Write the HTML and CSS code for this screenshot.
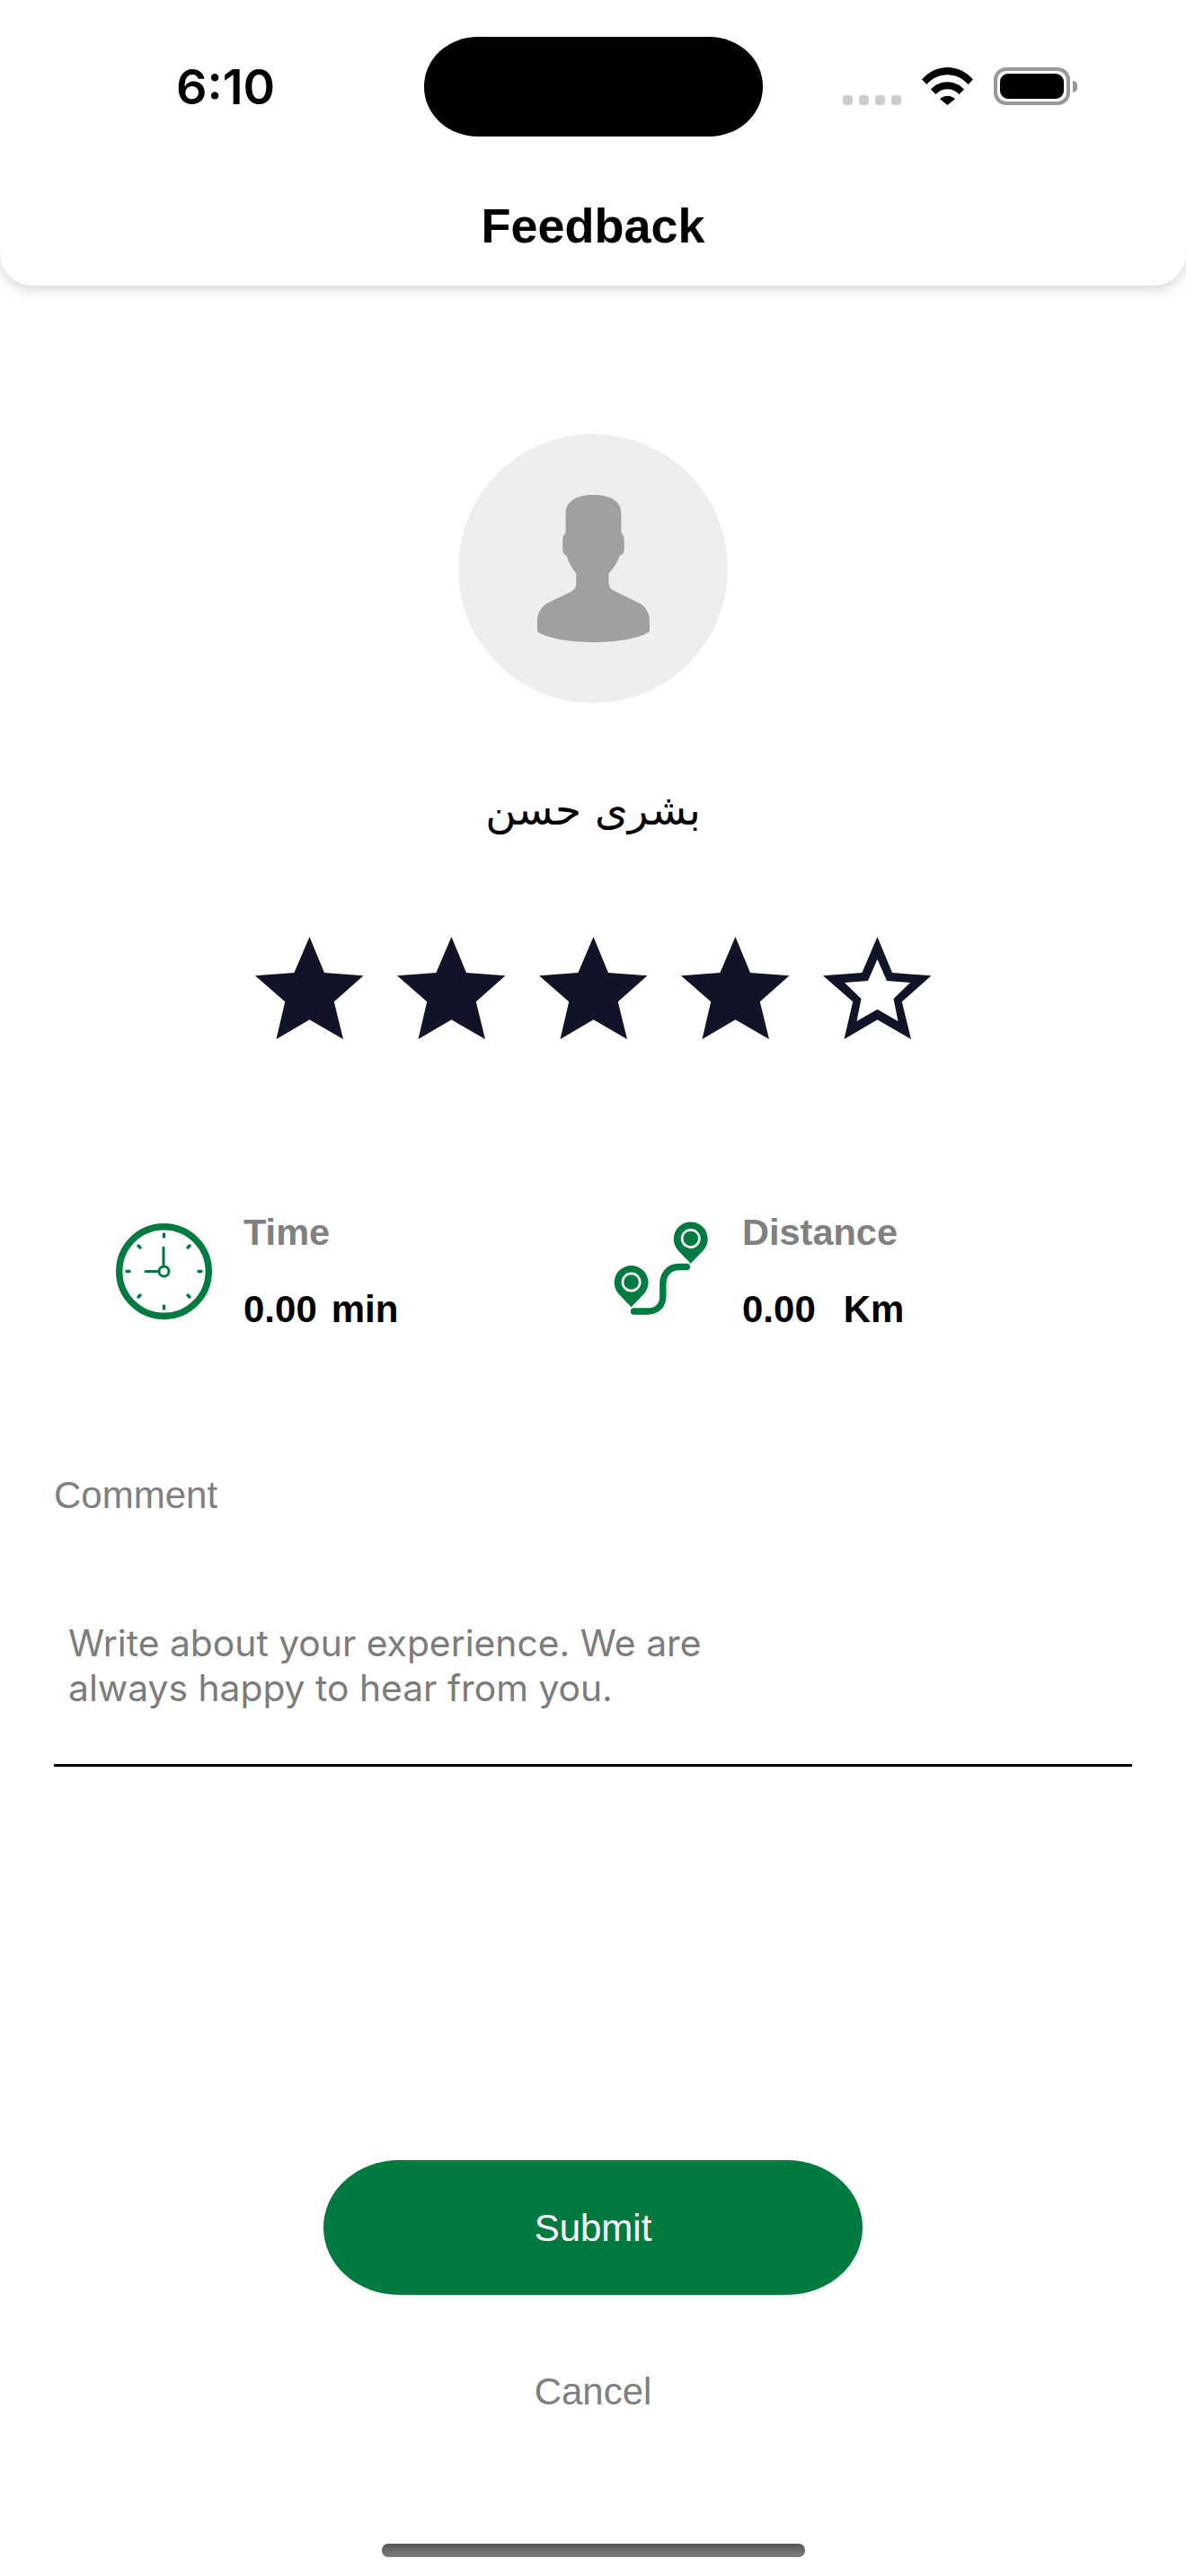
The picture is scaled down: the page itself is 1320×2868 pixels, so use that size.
FILE: index.html
```html
<!DOCTYPE html>
<html lang="en">
<head>
  <meta charset="UTF-8">
  <meta name="viewport" content="width=device-width, initial-scale=1.0">
  <title>Feedback</title>
  <link rel="stylesheet" href="styles.css">
</head>
<body>
<header class="top-card">
  <div class="status-bar">
    <div class="status-time">6:10</div>
    <div class="island"></div>
    <div class="status-icons">
      <div class="signal">
        <span class="signal-dot"></span>
        <span class="signal-dot"></span>
        <span class="signal-dot"></span>
        <span class="signal-dot"></span>
      </div>
      <svg class="wifi" viewBox="0 0 57 42">
        <path d="M0 13.5C7.5 4.8 17.5 0 28.5 0S49.500 4.800 57 13.500L51.600 19C45.500 12 37.500 8.200 28.500 8.200S11.500 12 5.400 19Z"/>
        <path d="M10 24.500C14.700 19.200 21.300 16.200 28.500 16.200S42.300 19.200 47 24.500L41.500 30C38.200 26.300 33.600 24.300 28.500 24.300S18.800 26.300 15.500 30Z"/>
        <path d="M20 35.200C22.200 33 25.200 31.800 28.500 31.800S34.800 33 37 35.200L28.500 42Z"/>
      </svg>
      <div class="battery">
        <div class="battery-body"><div class="battery-level"></div></div>
        <div class="battery-nub"></div>
      </div>
    </div>
  </div>
  <h1 class="page-title">Feedback</h1>
</header>

<main class="content">
  <div class="avatar">
    <svg class="avatar-icon" viewBox="352 272 376 493">
      <path d="M540 272C480 272 447 295 447 335L447 398C440 405 437 412 437 425L437 450C437 465 442 472 450 475C457 500 470 520 482 535L482 570C482 585 475 590 465 596L385 635C365 648 352 665 352 695L352 728C375 750 460 765 540 765C620 765 705 750 728 728L728 695C728 665 715 648 695 635L615 596C605 590 591 585 591 565L591 535C605 520 620 500 628 475C638 472 643 465 643 450L643 425C643 412 640 405 633 398L633 335C633 295 600 272 540 272Z"/>
    </svg>
  </div>
  <div class="user-name" dir="rtl">بشرى حسن</div>

  <div class="stars">
    <svg class="star" viewBox="0 0 121 114"><path d="M60.500 0L77 40L120.500 43.300L87.800 72.300L98 114L60.500 92.300L23.500 114L33.200 72.300L0 43.300L43.400 40Z"/></svg>
    <svg class="star" viewBox="0 0 121 114"><path d="M60.500 0L77 40L120.500 43.300L87.800 72.300L98 114L60.500 92.300L23.500 114L33.200 72.300L0 43.300L43.400 40Z"/></svg>
    <svg class="star" viewBox="0 0 121 114"><path d="M60.500 0L77 40L120.500 43.300L87.800 72.300L98 114L60.500 92.300L23.500 114L33.200 72.300L0 43.300L43.400 40Z"/></svg>
    <svg class="star" viewBox="0 0 121 114"><path d="M60.500 0L77 40L120.500 43.300L87.800 72.300L98 114L60.500 92.300L23.500 114L33.200 72.300L0 43.300L43.400 40Z"/></svg>
    <svg class="star" viewBox="0 0 121 114"><path fill-rule="evenodd" d="M60.500 0L77 40L120.500 43.300L87.800 72.300L98 114L60.500 92.300L23.500 114L33.200 72.300L0 43.300L43.400 40ZM60.500 25L71 49L97 51L78.500 69L83.500 94L60.500 80.700L37.500 94L42.500 69L24 51L50 49Z"/></svg>
  </div>

  <div class="stats">
    <div class="stat stat-time">
      <svg class="clock" viewBox="0 0 107 107">
        <circle cx="53.500" cy="53.500" r="49.800" fill="none" stroke-width="7.400"/>
        <path d="M53.500 12V15M53.500 92V95M12 53.500H15M92 53.500H95M25 25L27 27M80 27L82 25M25 82L27 80M80 80L82 82" stroke-width="3.500" stroke-linecap="round"/>
        <path d="M53 27V46M33 53.500H46" stroke-width="3" stroke-linecap="round"/>
        <circle cx="53.500" cy="53.500" r="5.500" fill="none" stroke-width="3"/>
      </svg>
      <div class="stat-text">
        <div class="stat-label">Time</div>
        <div class="stat-value"><span>0.00</span><span>min</span></div>
      </div>
    </div>
    <div class="stat stat-distance">
      <svg class="route" viewBox="95 85 320 325">
        <path class="route-line" d="M165 392L210 392C245 392 262 370 262 340L262 300C262 265 285 243 315 243L342 243"/>
        <path class="route-pin" d="M355 232L313 188A57 57 0 1 1 397 188Z"/>
        <circle class="route-ring" cx="355" cy="148" r="29"/>
        <path class="route-pin" d="M156 378L114 334A57 57 0 1 1 198 334Z"/>
        <circle class="route-ring" cx="156" cy="294" r="29"/>
      </svg>
      <div class="stat-text">
        <div class="stat-label">Distance</div>
        <div class="stat-value stat-value-wide"><span>0.00</span><span>Km</span></div>
      </div>
    </div>
  </div>

  <div class="comment">
    <div class="comment-label">Comment</div>
    <div class="comment-box">Write about your experience. We are<br>always happy to hear from you.</div>
  </div>

  <button class="btn-submit">Submit</button>
  <div class="btn-cancel">Cancel</div>
  <div class="home-bar"></div>
</main>
</body>
</html>
```

FILE: styles.css
```css
:root {
  --green: #007b40;
  --grey-text: #808080;
  --star: #111427;
}

* {
  box-sizing: border-box;
  margin: 0;
  padding: 0;
}

html, body {
  height: 2868px;
  overflow: hidden;
}

body {
  background-color: #fff;
  color: #000;
  font-family: "Liberation Sans", Arial, sans-serif;
}

.top-card {
  height: 318px;
  background-color: #fff;
  border-radius: 0 0 36px 36px;
  box-shadow: 0 5px 14px rgba(0, 0, 0, 0.16);
}

.status-bar {
  display: flex;
  align-items: flex-start;
  height: 220px;
  padding: 41px 0 0 196px;
}

.status-time {
  width: 276px;
  margin-top: 24px;
  font-family: Inter, sans-serif;
  font-size: 54px;
  line-height: 64px;
  font-weight: 600;
}

.island {
  width: 377px;
  height: 111px;
  background-color: #000;
  border-radius: 60px / 55px;
}

.status-icons {
  display: flex;
  align-items: flex-end;
  height: 76px;
  margin-left: 89px;
}

.signal {
  display: flex;
  gap: 7px;
}

.signal-dot {
  width: 11px;
  height: 11px;
  background-color: #ccc;
  border-radius: 4px;
}

.wifi {
  display: block;
  width: 57px;
  height: 42px;
  margin-left: 23px;
}

.battery {
  display: flex;
  align-items: center;
  margin-left: 23px;
}

.battery-body {
  width: 85px;
  height: 42px;
  padding: 3px;
  border: 4px solid #999;
  border-radius: 14px;
}

.battery-level {
  width: 100%;
  height: 100%;
  background-color: #000;
  border-radius: 9px;
}

.battery-nub {
  width: 5px;
  height: 13px;
  margin-left: 3px;
  background-color: #999;
  border-radius: 0 5px 5px 0;
}

.page-title {
  font-size: 54px;
  line-height: 62px;
  font-weight: 700;
  text-align: center;
}

.content {
  display: flex;
  flex-direction: column;
  align-items: center;
}

.avatar {
  display: flex;
  align-items: center;
  justify-content: center;
  width: 300px;
  height: 300px;
  margin-top: 165px;
  background-color: #eee;
  border-radius: 50%;
}

.avatar-icon {
  width: 125px;
  height: 164px;
  fill: #a0a0a0;
}

.user-name {
  margin-top: 91px;
  font-family: "DejaVu Sans", sans-serif;
  font-size: 47px;
  line-height: 56px;
}

.stars {
  display: flex;
  gap: 37px;
  margin-top: 113px;
}

.star {
  display: block;
  width: 121px;
  height: 114px;
  fill: var(--star);
}

.stats {
  display: flex;
  align-self: stretch;
  margin-top: 191px;
  padding-left: 129px;
}

.stat {
  display: flex;
  align-items: flex-start;
}

.stat-time {
  width: 553px;
  gap: 35px;
}

.stat-distance {
  gap: 37px;
}

.clock {
  display: block;
  width: 107px;
  height: 107px;
  margin-top: 14px;
  fill: none;
  stroke: var(--green);
}

.route {
  display: block;
  width: 107px;
  height: 108px;
  margin-top: 10px;
}

.route-line {
  fill: none;
  stroke: var(--green);
  stroke-width: 22;
  stroke-linecap: round;
}

.route-pin {
  fill: var(--green);
}

.route-ring {
  fill: var(--green);
  stroke: #fff;
  stroke-width: 8;
}

.stat-label {
  font-size: 41.5px;
  line-height: 48px;
  font-weight: 700;
  color: var(--grey-text);
}

.stat-value {
  display: flex;
  gap: 16px;
  margin-top: 38px;
  font-size: 42px;
  line-height: 48px;
  font-weight: 700;
}

.stat-value-wide {
  gap: 31px;
}

.comment {
  align-self: stretch;
  margin-top: 159px;
  padding: 0 60px;
}

.comment-label {
  font-size: 42px;
  line-height: 48px;
  color: var(--grey-text);
}

.comment-box {
  height: 163px;
  margin-top: 115px;
  padding-left: 16px;
  border-bottom: 3px solid #000;
  font-family: Inter, sans-serif;
  font-size: 40.8px;
  line-height: 50px;
  color: #7c7c7c;
}

.btn-submit {
  display: block;
  width: 600px;
  height: 150px;
  margin-top: 438px;
  padding-top: 2px;
  background-color: var(--green);
  border: none;
  border-radius: 84px / 75px;
  color: #fff;
  font-family: "Liberation Sans", Arial, sans-serif;
  font-size: 42px;
}

.btn-cancel {
  margin-top: 84px;
  font-size: 42px;
  line-height: 48px;
  color: var(--grey-text);
}

.home-bar {
  width: 471px;
  height: 15px;
  margin-top: 145px;
  background: linear-gradient(#555, #808080);
  border-radius: 7px;
}
```
